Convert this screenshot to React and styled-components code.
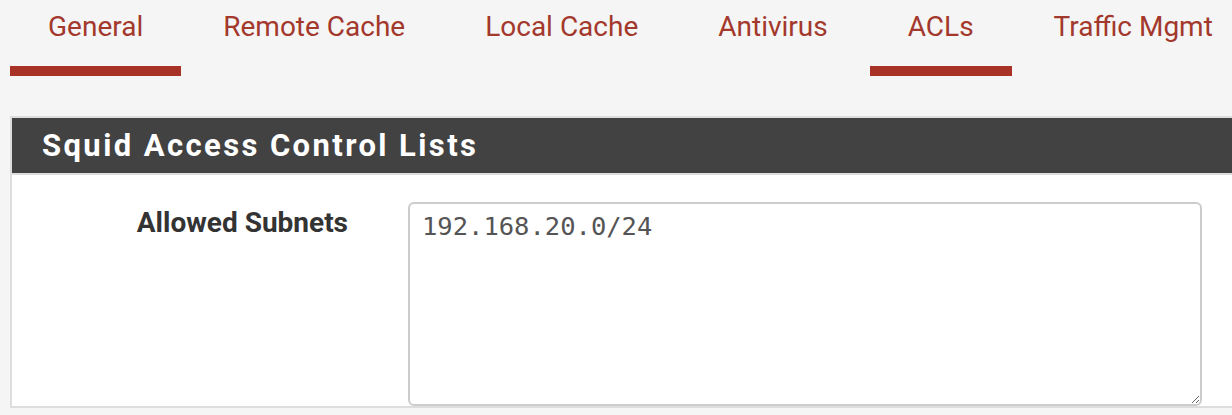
import React from "react";
import styled, { createGlobalStyle } from "styled-components";

const Global = createGlobalStyle`
  html, body {
    margin: 0;
    padding: 0;
    background: #f5f5f5;
    overflow: hidden;
    font-family: Roboto, "Noto Sans", sans-serif;
  }
`;

const Page = styled.div`
  width: 1232px;
  height: 415px;
  overflow: hidden;
  background: #f5f5f5;
`;

const TabBar = styled.nav`
  display: flex;
  gap: 4px;
  padding-left: 10px;
  white-space: nowrap;
`;

const Tab = styled.a`
  display: block;
  padding: 7px 38px 20px;
  font-size: 28px;
  line-height: 39px;
  color: #a3382c;
  text-decoration: none;
  border-bottom: 10px solid ${(p) => (p.$active ? "#a93226" : "transparent")};
  flex: none;
`;

const Panel = styled.section`
  margin: 40px 0 0 10px;
  width: 1260px;
  border: 2px solid #dddddd;
  background: #ffffff;
`;

const PanelHeading = styled.h2`
  margin: 0;
  height: 55px;
  display: flex;
  align-items: center;
  padding-left: 30px;
  background: #424242;
  color: #ffffff;
  font-size: 31px;
  font-weight: 700;
  letter-spacing: 2.4px;
  border-bottom: 2px solid #dddddd;
`;

const PanelBody = styled.div`
  padding-top: 27px;
`;

const FormRow = styled.div`
  display: grid;
  grid-template-columns: 396px 794px;
  align-items: start;
`;

const Label = styled.label`
  justify-self: end;
  padding-right: 60px;
  padding-top: 2px;
  font-size: 28px;
  line-height: 38px;
  font-weight: 700;
  color: #333333;
`;

const TextArea = styled.textarea`
  box-sizing: border-box;
  width: 794px;
  height: 204px;
  margin: 0;
  padding: 5px 12px;
  border: 2px solid #cccccc;
  border-radius: 6px;
  font-family: "DejaVu Sans Mono", "Liberation Mono", monospace;
  font-size: 25.5px;
  line-height: 34px;
  color: #555555;
  background: #ffffff;
  outline: none;
`;

const tabs = [
  { label: "General", active: true },
  { label: "Remote Cache" },
  { label: "Local Cache" },
  { label: "Antivirus" },
  { label: "ACLs", active: true },
  { label: "Traffic Mgmt" },
];

export default function App() {
  return (
    <Page>
      <Global />
      <TabBar>
        {tabs.map((t) => (
          <Tab key={t.label} $active={t.active}>
            {t.label}
          </Tab>
        ))}
      </TabBar>
      <Panel>
        <PanelHeading>Squid Access Control Lists</PanelHeading>
        <PanelBody>
          <FormRow>
            <Label htmlFor="subnets">Allowed Subnets</Label>
            <TextArea id="subnets" defaultValue="192.168.20.0/24" />
          </FormRow>
        </PanelBody>
      </Panel>
    </Page>
  );
}
